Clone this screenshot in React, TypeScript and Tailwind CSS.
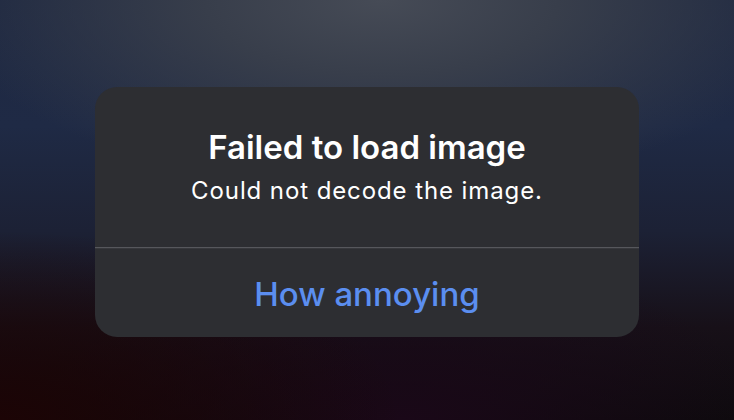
import React from "react";

export default function App() {
  return (
    <div className="w-[734px] h-[420px] overflow-hidden flex items-center justify-center pt-[4px] bg-[radial-gradient(ellipse_60%_45%_at_52%_0%,#464b56_0%,#383e4b_40%,transparent_100%),radial-gradient(ellipse_55%_45%_at_0%_100%,#1c0405_0%,transparent_100%),radial-gradient(ellipse_50%_40%_at_55%_100%,#1a0818_0%,transparent_100%),linear-gradient(180deg,#1e2841_0%,#1f2a45_30%,#1c2135_55%,#171018_78%,#0d0a0d_100%)] font-['Inter','Noto_Sans',sans-serif]">
      <div className="w-[544px] h-[250px] rounded-[22px] bg-[#2d2e32] flex flex-col overflow-hidden">
        <div className="h-[160px] flex flex-col items-center pt-[40px]">
          <h1 className="text-[33px] leading-[40px] font-semibold text-white">
            Failed to load image
          </h1>
          <p className="mt-[10px] text-[24px] leading-[28px] text-white tracking-[0.9px]">
            Could not decode the image.
          </p>
        </div>
        <div className="h-px bg-[#56575c] border-b border-[#37383c] box-content" />
        <button className="flex-1 flex items-center justify-center pt-[3px] text-[33px] text-[#5b8ef0] font-medium">
          How annoying
        </button>
      </div>
    </div>
  );
}
